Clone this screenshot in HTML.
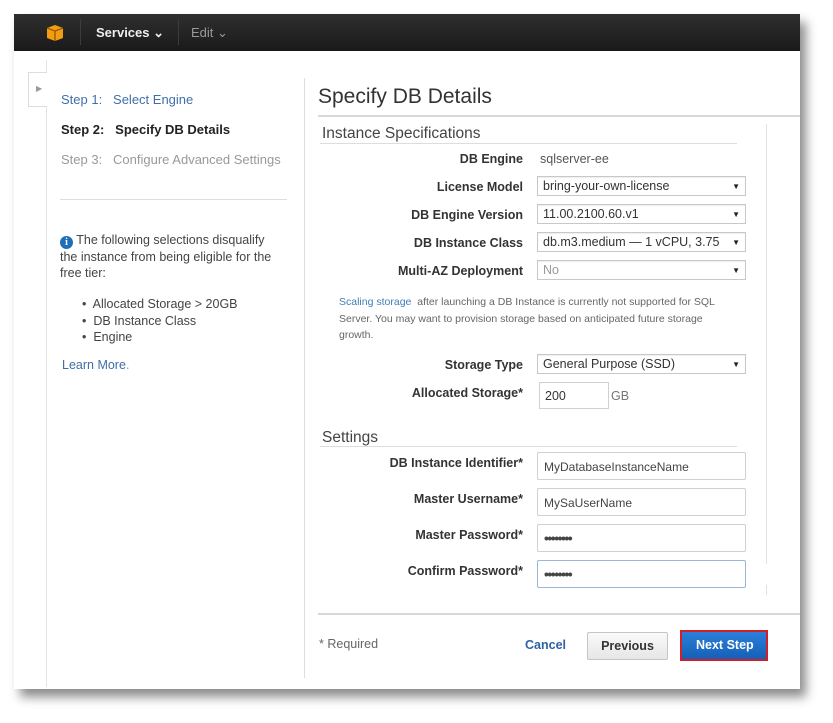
<!DOCTYPE html>
<html><head><meta charset="utf-8"><style>
*{margin:0;padding:0;box-sizing:border-box}
body{width:833px;height:723px;background:#fff;font-family:"Liberation Sans",Arial,sans-serif;position:relative;overflow:hidden;color:#333}
.a{position:absolute}
#frame{left:14px;top:14px;width:786px;height:675px;background:#fff;box-shadow:6px 8px 10px rgba(0,0,0,.45)}
#bar{left:14px;top:14px;width:786px;height:37px;background:linear-gradient(#2f2f2f,#1a1a1a)}
.lbl{position:absolute;right:310px;width:220px;text-align:right;font-size:12.5px;font-weight:bold;color:#333}
.sel{position:absolute;left:537px;width:209px;height:20px;border:1px solid #c8c8c8;background:#fff;font-size:12.5px;padding:2px 5px;color:#333;box-shadow:inset 0 1px 1px #eee}
.sel:after{content:"▼";position:absolute;right:5px;top:5px;font-size:8px;color:#222}
.inp{position:absolute;left:537px;width:209px;height:28px;border:1px solid #d0d0d0;border-radius:2px;background:#fff;font-size:12px;padding:7px 6px;color:#444}
.pw{font-size:14px;line-height:16px;padding:5px 6px;font-weight:bold;letter-spacing:-1.5px}
</style></head><body>
<div class="a" id="frame"></div>
<div class="a" id="bar"></div>
<svg class="a" style="left:45px;top:23px" width="20" height="20" viewBox="0 0 20 20"><path d="M2 5 L10 2 L18 5 L18 15 L10 18 L2 15Z" fill="#f39c12"/><path d="M2 5 L10 8 L18 5 M10 8 L10 18" stroke="#8a5200" stroke-width="1.2" fill="none"/></svg>
<div class="a" style="left:80px;top:19px;width:1px;height:26px;background:#3c3c3c"></div>
<div class="a" style="left:96px;top:25px;font-size:13px;font-weight:bold;color:#eee">Services &#8964;</div>
<div class="a" style="left:178px;top:19px;width:1px;height:26px;background:#3c3c3c"></div>
<div class="a" style="left:191px;top:25px;font-size:13px;color:#999">Edit &#8964;</div>

<div class="a" style="left:28px;top:72px;width:19px;height:35px;border:1px solid #ddd;border-right:none;background:#fff"></div>
<div class="a" style="left:36px;top:84px;font-size:8px;color:#999">▶</div>
<div class="a" style="left:46px;top:107px;width:1px;height:580px;background:#e4e4e4"></div>
<div class="a" style="left:46px;top:60px;width:1px;height:12px;background:#e4e4e4"></div>
<div class="a" style="left:304px;top:78px;width:1px;height:600px;background:#ddd"></div>
<div class="a" style="left:61px;top:92px;font-size:13px;color:#3f6fa8">Step 1:&nbsp;&nbsp;&nbsp;Select Engine</div>
<div class="a" style="left:61px;top:122px;font-size:13px;font-weight:bold;color:#222">Step 2:&nbsp;&nbsp;&nbsp;Specify DB Details</div>
<div class="a" style="left:61px;top:152px;font-size:13px;color:#999">Step 3:&nbsp;&nbsp;&nbsp;Configure Advanced Settings</div>
<div class="a" style="left:60px;top:199px;width:227px;height:1px;background:#ddd"></div>
<div class="a" style="left:60px;top:232px;width:225px;font-size:12.5px;line-height:16px;color:#444"><span style="display:inline-block;width:13px;height:13px;border-radius:50%;background:#1f6fb8;color:#fff;font-size:10px;font-weight:bold;text-align:center;line-height:13px;font-family:'Liberation Serif',serif;vertical-align:-1px">i</span> The following selections disqualify the instance from being eligible for the free tier:</div>
<div class="a" style="left:82px;top:296px;font-size:12.5px;line-height:16.5px;color:#444">•&nbsp; Allocated Storage &gt; 20GB<br>•&nbsp; DB Instance Class<br>•&nbsp; Engine</div>
<div class="a" style="left:62px;top:358px;font-size:12.5px;color:#3f6fa8">Learn More<span style="color:#999">.</span></div>

<div class="a" style="left:318px;top:85px;font-size:21px;color:#333">Specify DB Details</div>
<div class="a" style="left:318px;top:115px;width:482px;height:2px;background:#d8d8d8"></div>
<div class="a" style="left:766px;top:124px;width:1px;height:440px;background:#e0e0e0"></div>
<div class="a" style="left:766px;top:585px;width:1px;height:10px;background:#e0e0e0"></div>
<div class="a" style="left:322px;top:125px;font-size:15.5px;color:#444">Instance Specifications</div>
<div class="a" style="left:320px;top:143px;width:417px;height:1px;background:#ddd"></div>

<div class="lbl" style="top:152px">DB Engine</div>
<div class="a" style="left:540px;top:152px;font-size:12.5px;color:#555">sqlserver-ee</div>
<div class="lbl" style="top:180px">License Model</div>
<div class="sel" style="top:176px">bring-your-own-license</div>
<div class="lbl" style="top:208px">DB Engine Version</div>
<div class="sel" style="top:204px">11.00.2100.60.v1</div>
<div class="lbl" style="top:236px">DB Instance Class</div>
<div class="sel" style="top:232px">db.m3.medium — 1 vCPU, 3.75</div>
<div class="lbl" style="top:264px">Multi-AZ Deployment</div>
<div class="sel" style="top:260px;color:#999">No</div>

<div class="a" style="left:339px;top:294px;width:390px;font-size:10.5px;line-height:16.5px;color:#666"><span style="color:#3f7fb8">Scaling storage</span>&nbsp; after launching a DB Instance is currently not supported for SQL Server. You may want to provision storage based on anticipated future storage growth.</div>

<div class="lbl" style="top:358px">Storage Type</div>
<div class="sel" style="top:354px">General Purpose (SSD)</div>
<div class="lbl" style="top:386px">Allocated Storage*</div>
<div class="a" style="left:539px;top:382px;width:70px;height:27px;border:1px solid #d0d0d0;font-size:12.5px;padding:6px 5px;color:#333">200</div>
<div class="a" style="left:611px;top:389px;font-size:12.5px;color:#777">GB</div>

<div class="a" style="left:322px;top:429px;font-size:15.5px;color:#444">Settings</div>
<div class="a" style="left:320px;top:446px;width:417px;height:1px;background:#ddd"></div>
<div class="lbl" style="top:456px">DB Instance Identifier*</div>
<div class="inp" style="top:452px">MyDatabaseInstanceName</div>
<div class="lbl" style="top:492px">Master Username*</div>
<div class="inp" style="top:488px">MySaUserName</div>
<div class="lbl" style="top:528px">Master Password*</div>
<div class="inp pw" style="top:524px">••••••••</div>
<div class="lbl" style="top:564px">Confirm Password*</div>
<div class="inp pw" style="top:560px;border-color:#9ab6d8">••••••••</div>

<div class="a" style="left:318px;top:613px;width:482px;height:2px;background:#d8d8d8"></div>
<div class="a" style="left:319px;top:637px;font-size:12.5px;color:#666">* Required</div>
<div class="a" style="left:525px;top:638px;font-size:12.5px;font-weight:bold;color:#2d63a6">Cancel</div>
<div class="a" style="left:587px;top:632px;width:81px;height:28px;border:1px solid #c5c5c5;border-radius:2px;background:linear-gradient(#fafafa,#e6e6e6);font-size:12.5px;font-weight:bold;color:#333;text-align:center;line-height:26px">Previous</div>
<div class="a" style="left:680px;top:630px;width:88px;height:31px;border:2px solid #d0202a;background:linear-gradient(#2b7fd8,#1560b8);font-size:12.5px;font-weight:bold;color:#fff;padding-left:14px;line-height:27px">Next Step</div>
</body></html>
